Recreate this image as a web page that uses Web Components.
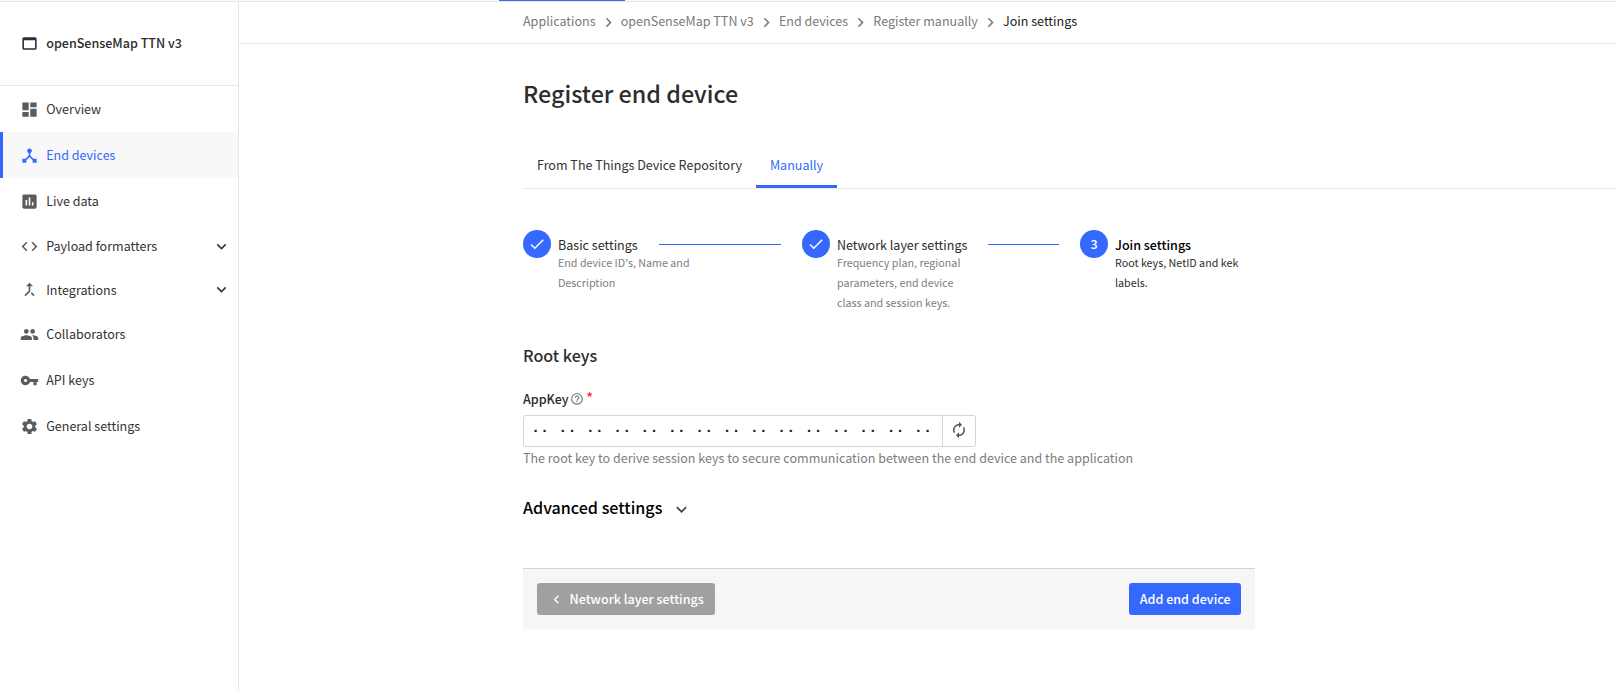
<!DOCTYPE html>
<html lang="en">
<head>
<meta charset="utf-8">
<title>Register end device</title>
<style>
html, body { margin: 0; height: 100%; background: #fff; }
body { font-family: "Noto Sans CJK SC", "Noto Sans", sans-serif; font-size: 12.54px; line-height: 20px; color: #333; overflow: hidden; }
</style>
</head>
<body>
<device-console></device-console>
<script>
const define = (name, html, setup) => customElements.define(name, class extends HTMLElement {
  connectedCallback() {
    if (this.shadowRoot) return;
    const root = this.attachShadow({ mode: 'open' });
    const t = document.createElement('template');
    t.innerHTML = typeof html === 'function' ? html(this) : html;
    root.append(t.content.cloneNode(true));
    if (setup) setup(this, root);
  }
});

const ICONS = {
  app: 'M19 4H5c-1.11 0-2 .9-2 2v12c0 1.1.89 2 2 2h14c1.1 0 2-.9 2-2V6c0-1.1-.89-2-2-2zm0 14H5V8h14v10z',
  overview: 'M3 13h8V3H3v10zm0 8h8v-6H3v6zm10 0h8V11h-8v10zm0-18v6h8V3h-8z',
  devices: 'M17 16l-4-4V8.82C14.16 8.4 15 7.3 15 6c0-1.66-1.34-3-3-3S9 4.34 9 6c0 1.3.84 2.4 2 2.82V12l-4 4H3v5h5v-3.05l4-4.2 4 4.2V21h5v-5h-4z',
  data: 'M19 3H5c-1.1 0-2 .9-2 2v14c0 1.1.9 2 2 2h14c1.1 0 2-.9 2-2V5c0-1.1-.9-2-2-2zM9 17H7v-7h2v7zm4 0h-2V7h2v10zm4 0h-2v-4h2v4z',
  code: 'M9.4 16.6L4.8 12l4.6-4.6L8 6l-6 6 6 6 1.4-1.4zm5.2 0l4.6-4.6-4.6-4.6L16 6l6 6-6 6-1.4-1.4z',
  merge: 'M17 20.41L18.41 19 15 15.59 13.59 17 17 20.41zM7.5 8H11v5.59L5.59 19 7 20.41l6-6V8h3.5L12 3.5 7.5 8z',
  people: 'M16 11c1.66 0 2.99-1.34 2.99-3S17.66 5 16 5c-1.66 0-3 1.34-3 3s1.34 3 3 3zm-8 0c1.66 0 2.99-1.34 2.99-3S9.66 5 8 5C6.34 5 5 6.34 5 8s1.34 3 3 3zm0 2c-2.33 0-7 1.17-7 3.5V19h14v-2.5c0-2.33-4.67-3.5-7-3.5zm8 0c-.29 0-.62.02-.97.05 1.16.84 1.97 1.97 1.97 3.45V19h6v-2.5c0-2.33-4.67-3.5-7-3.5z',
  key: 'M12.65 10C11.83 7.67 9.61 6 7 6c-3.31 0-6 2.69-6 6s2.69 6 6 6c2.61 0 4.83-1.67 5.65-4H17v4h4v-4h2v-4H12.65zM7 14c-1.1 0-2-.9-2-2s.9-2 2-2 2 .9 2 2-.9 2-2 2z',
  gear: 'M19.14 12.94c.04-.3.06-.61.06-.94 0-.32-.02-.64-.07-.94l2.03-1.58c.18-.14.23-.41.12-.61l-1.92-3.32c-.12-.22-.37-.29-.59-.22l-2.39.96c-.5-.38-1.03-.7-1.62-.94l-.36-2.54c-.04-.24-.24-.41-.48-.41h-3.84c-.24 0-.43.17-.47.41l-.36 2.54c-.59.24-1.13.57-1.62.94l-2.39-.96c-.22-.08-.47 0-.59.22L2.74 8.87c-.12.21-.08.47.12.61l2.03 1.58c-.05.3-.09.63-.09.94s.02.64.07.94l-2.03 1.58c-.18.14-.23.41-.12.61l1.92 3.32c.12.22.37.29.59.22l2.39-.96c.5.38 1.03.7 1.62.94l.36 2.54c.05.24.24.41.48.41h3.84c.24 0 .44-.17.47-.41l.36-2.54c.59-.24 1.13-.56 1.62-.94l2.39.96c.22.08.47 0 .59-.22l1.92-3.32c.12-.22.07-.47-.12-.61l-2.01-1.58zM12 15.6c-1.98 0-3.6-1.62-3.6-3.6s1.62-3.6 3.6-3.6 3.6 1.62 3.6 3.6-1.62 3.6-3.6 3.6z',
  down: 'M7.41 8.59L12 13.17l4.59-4.58L18 10l-6 6-6-6 1.41-1.41z',
  right: 'M10 6L8.59 7.41 13.17 12l-4.58 4.59L10 18l6-6z',
  left: 'M15.41 7.41L14 6l-6 6 6 6 1.41-1.41L10.83 12z',
  check: 'M9 16.17L4.83 12l-1.42 1.41L9 19 21 7l-1.41-1.41z',
  help: 'M11 18h2v-2h-2v2zm1-16C6.48 2 2 6.48 2 12s4.48 10 10 10 10-4.48 10-10S17.52 2 12 2zm0 18c-4.41 0-8-3.59-8-8s3.59-8 8-8 8 3.59 8 8-3.59 8-8 8zm0-14c-2.21 0-4 1.79-4 4h2c0-1.1.9-2 2-2s2 .9 2 2c0 2-3 1.75-3 5h2c0-2.25 3-2.5 3-5 0-2.21-1.79-4-4-4z',
  renew: 'M12 6v3l4-4-4-4v3c-4.42 0-8 3.58-8 8 0 1.57.46 3.03 1.24 4.26L6.7 14.8c-.45-.83-.7-1.79-.7-2.8 0-3.31 2.69-6 6-6zm6.76 1.74L17.3 9.2c.44.84.7 1.79.7 2.8 0 3.31-2.69 6-6 6v-3l-4 4 4 4v-3c4.42 0 8-3.58 8-8 0-1.57-.46-3.03-1.24-4.26z'
};

define('c-icon', el => {
  const s = el.getAttribute('size') || 19;
  return `<style>:host{display:block;flex:none;width:${s}px;height:${s}px}svg{display:block;width:100%;height:100%;fill:currentColor}</style>
  <svg viewBox="0 0 24 24"><path d="${ICONS[el.getAttribute('name')]}"/></svg>`;
});

define('top-bar', `<style>
  :host{display:block;flex:none;height:1px;background:#fafafa;border-bottom:1px solid #e8e8e8}
  div{width:126px;height:1px;margin-left:499px;background:#3568ff}
</style><div></div>`);

define('side-item', el => `<style>
  :host{display:flex;align-items:center;box-sizing:border-box;height:46px;padding:0 7px 0 20px;color:#333}
  :host([expandable]){height:44px}
  :host([active]){background:#f8f8f8;color:#3568ff;box-shadow:inset 3px 0 #3568ff}
  .i{color:#5c5c5c} :host([active]) .i{color:#3568ff}
  span{margin-left:7.2px;flex:1;white-space:nowrap}
</style><c-icon class="i" name="${el.getAttribute('icon')}"></c-icon><span><slot></slot></span>${el.hasAttribute('expandable') ? '<c-icon name="down" size="19"></c-icon>' : ''}`);

define('side-bar', `<style>
  :host{display:block;flex:none;width:238px;border-right:1px solid #e8e8e8}
  header{display:flex;align-items:center;gap:7.2px;height:84px;box-sizing:border-box;padding:0 0 1px 20px;border-bottom:1px solid #e8e8e8;font-weight:500;color:#2d2d2d}
  nav{display:flex;flex-direction:column}
</style>
<header><c-icon name="app"></c-icon><span>openSenseMap TTN v3</span></header>
<nav>
  <side-item icon="overview">Overview</side-item>
  <side-item icon="devices" active>End devices</side-item>
  <side-item icon="data">Live data</side-item>
  <side-item icon="code" expandable>Payload formatters</side-item>
  <side-item icon="merge" expandable style="height:43px">Integrations</side-item>
  <side-item icon="people">Collaborators</side-item>
  <side-item icon="key">API keys</side-item>
  <side-item icon="gear">General settings</side-item>
</nav>`);

define('bread-crumbs', `<style>
  :host{display:flex;align-items:center;box-sizing:border-box;height:42px;padding:0 0 3px 284px;border-bottom:1px solid #e8e8e8;color:#7a7a7a;white-space:nowrap}
  c-icon{margin:2px 3px 0 3.2px} b{font-weight:400;color:#222}
</style>
<span>Applications</span><c-icon name="right" size="19"></c-icon><span>openSenseMap TTN v3</span><c-icon name="right" size="19"></c-icon><span>End devices</span><c-icon name="right" size="19"></c-icon><span>Register manually</span><c-icon name="right" size="19"></c-icon><b>Join settings</b>`);

define('tab-bar', `<style>
  :host{display:flex;box-sizing:border-box;height:46px;border-bottom:1px solid #e8e8e8}
  span{box-sizing:border-box;height:45px;padding:12px 14px 0;white-space:nowrap}
  .on{color:#3568ff;border-bottom:3px solid #3568ff}
</style><span>From The Things Device Repository</span><span class="on">Manually</span>`);

define('wizard-step', el => `<style>
  :host{display:grid;grid-template-columns:28px 1fr;grid-template-rows:29px auto;align-content:start;column-gap:7px;flex:none}
  i{display:flex;align-items:center;justify-content:center;width:28px;height:28px;border-radius:50%;background:#3568ff;color:#fff;font-style:normal;font-weight:500}
  .h{display:flex;align-items:center;height:29px;color:#2b2b2b;white-space:nowrap}
  .h::after{content:"";flex:1;height:1px;background:#3568ff;margin:0 21px 0 21px}
  :host([current]) .h::after{display:none}
  :host([current]) .h{font-weight:500;color:#000}
  p{grid-column:2;margin:-6px 0 0;width:140px;font-size:10.72px;line-height:20px;color:#7d7d7d}
  :host([current]) p{color:#2b2b2b}
</style><i>${el.hasAttribute('current') ? '3' : '<c-icon name="check" size="18"></c-icon>'}</i><div class="h">${el.getAttribute('heading')}</div><p><slot></slot></p>`);

define('key-field', `<style>
  :host{display:block}
  label{display:flex;align-items:center;height:20px;font-weight:500;color:#2b2b2b}
  label c-icon{color:#777;margin-left:1.5px}
  sup{color:#f33;font-size:14px;line-height:14px;margin:-4px 0 0 2px;height:14px}
  .row{display:flex;box-sizing:border-box;width:453px;height:32px;margin-top:6px;border:1px solid #d5d5d5;border-radius:3px}
  .val{flex:1;padding-left:7px;font:bold 15.2px/30px "Liberation Mono",monospace;white-space:pre;color:#222}
  .btn{display:flex;align-items:center;justify-content:center;box-sizing:border-box;width:33px;padding-bottom:3px;border-left:1px solid #d5d5d5;color:#555}
  p{margin:1px 0 0;color:#7d7d7d;white-space:nowrap}
</style>
<label>AppKey<c-icon name="help" size="14"></c-icon><sup>*</sup></label>
<div class="row"><div class="val"></div><div class="btn"><c-icon name="renew" size="18"></c-icon></div></div>
<p>The root key to derive session keys to secure communication between the end device and the application</p>`,
(el, root) => { root.querySelector('.val').textContent = Array(15).fill('··').join(' '); });

define('c-button', `<style>
  :host{display:flex;align-items:center;box-sizing:border-box;height:32px;padding:0 10.5px;border-radius:3px;background:#3568ff;color:#fff;font-weight:500;white-space:nowrap}
  :host([secondary]){background:#a0a0a0;padding-right:11px}
</style><slot></slot>`);

define('register-form', `<style>
  :host{display:block;padding-left:284px}
  h1{margin:32px 0 0;font-size:23.3px;line-height:34px;font-weight:500;color:#2d2d2d}
  tab-bar{margin-top:33px}
  .form{width:732px}
  .steps{display:flex;margin-top:41px;height:82px}
  h2{margin:31px 0 0;font-size:16.1px;line-height:24px;font-weight:500;color:#2d2d2d}
  key-field{margin-top:22px}
  .adv{display:flex;align-items:center;gap:8.5px;height:24px;margin-top:27px;color:#000}
  .adv c-icon{color:#444;margin-top:4px}
  footer{display:flex;justify-content:space-between;box-sizing:border-box;height:61px;margin-top:49px;padding:14px 14px 0;background:#f6f6f6;border-top:1px solid #d5d5d5}
</style>
<h1>Register end device</h1>
<tab-bar></tab-bar>
<div class="form">
  <div class="steps">
    <wizard-step heading="Basic settings" style="width:279px">End device ID's, Name and Description</wizard-step>
    <wizard-step heading="Network layer settings" style="width:278px">Frequency plan, regional parameters, end device class and session keys.</wizard-step>
    <wizard-step heading="Join settings" current style="width:175px">Root keys, NetID and kek labels.</wizard-step>
  </div>
  <h2>Root keys</h2>
  <key-field></key-field>
  <h2 class="adv">Advanced settings<c-icon name="down" size="21"></c-icon></h2>
  <footer>
    <c-button secondary><c-icon name="left" size="17" style="margin-right:5px"></c-icon>Network layer settings</c-button>
    <c-button>Add end device</c-button>
  </footer>
</div>`);

define('device-console', `<style>
  :host{display:flex;flex-direction:column;height:100vh}
  .body{display:flex;flex:1;min-height:0}
  main{flex:1;min-width:0}
</style>
<top-bar></top-bar>
<div class="body"><side-bar></side-bar><main><bread-crumbs></bread-crumbs><register-form></register-form></main></div>`);
</script>
</body>
</html>
